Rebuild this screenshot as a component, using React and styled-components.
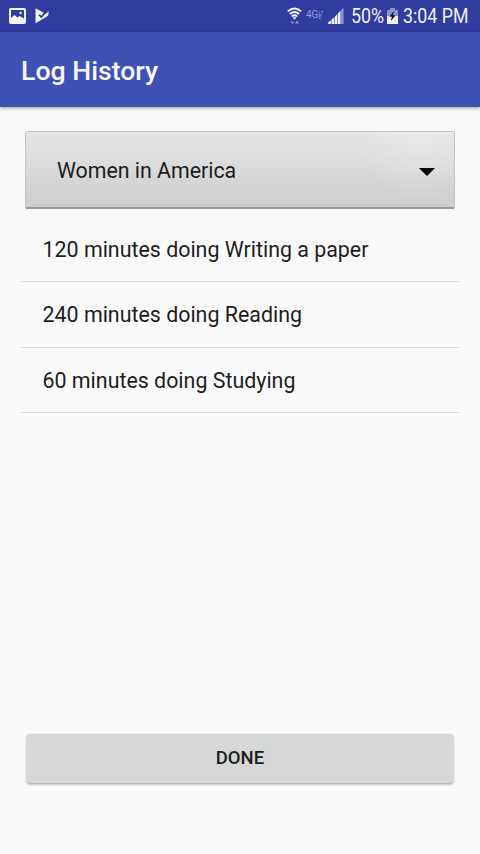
import React from "react";
import styled, { createGlobalStyle } from "styled-components";

const GlobalStyle = createGlobalStyle`
  * {
    box-sizing: border-box;
  }

  body {
    margin: 0;
    background: #fafafa;
    color: #1d1d1d;
    font-family: Roboto, "Liberation Sans", sans-serif;
  }
`;

const Screen = styled.div`
  display: flex;
  flex-direction: column;
  height: 854px;
  width: 480px;
  overflow: hidden;
  background: #fafafa;
`;

const StatusBar = styled.div`
  display: flex;
  align-items: center;
  justify-content: space-between;
  height: 32px;
  padding: 0 11px 0 9px;
  background: #303c9f;
  color: #f0f2fc;
`;

const StatusGroup = styled.div`
  display: flex;
  align-items: center;
  height: 32px;
`;

const StatusText = styled.span`
  width: ${(props) => props.$width}px;
  margin-right: ${(props) => props.$gap || 0}px;
  font-size: 20px;
  line-height: 34px;
  white-space: nowrap;
  transform: scaleX(0.89);
  transform-origin: left;
`;

const Network = styled.span`
  display: flex;
  align-items: center;
  width: 18px;
  height: 10px;
  margin: 0 4px 2px 0;
  color: #929ddd;
  font-size: 10px;
  line-height: 10px;
`;

const NetworkSuffix = styled.span`
  font-size: 5px;
  line-height: 4px;
  width: 5px;
  word-break: break-all;
`;

const StatusIcon = styled.svg`
  display: block;
  flex: none;
  margin-right: ${(props) => props.$gap || 0}px;
`;

const AppBar = styled.header`
  display: flex;
  align-items: center;
  height: 74.5px;
  padding: 3px 21px 0;
  background: #3f51b5;
  box-shadow: 0 1px 4px rgba(0, 0, 0, 0.4);
`;

const Title = styled.h1`
  margin: 0;
  color: #f8f9ff;
  font-size: 26.67px;
  font-weight: 500;
  line-height: 32px;
`;

const Content = styled.main`
  display: flex;
  flex: 1;
  flex-direction: column;
  padding: 24.5px 21px 71.5px;
`;

const Spinner = styled.div`
  display: flex;
  align-items: center;
  justify-content: space-between;
  height: 78px;
  margin: 0 4.5px 8px 4px;
  padding: 1px 18.5px 0 31px;
  border: 1px solid #c2c2c2;
  border-bottom: 2px solid #999;
  border-radius: 2px;
  background:
    radial-gradient(ellipse 60px 60px at 92% 10%, rgba(255, 255, 255, 0.2), transparent),
    linear-gradient(#e5e5e5, #cecece);
  font-size: 21.33px;
`;

const Arrow = styled.svg`
  display: block;
  margin-top: 3px;
`;

const LogList = styled.ul`
  flex: 1;
  margin: 0;
  padding: 0;
  list-style: none;
`;

const LogItem = styled.li`
  display: flex;
  align-items: center;
  height: 65.4px;
  padding: 0.6px 21.5px 0;
  border-bottom: 1px solid #dcdcdc;
  font-size: 21.4px;
`;

const DoneButton = styled.button`
  height: 49px;
  margin: 0 6px;
  padding: 0;
  border: 0;
  border-radius: 3px;
  background: #d6d7d7;
  box-shadow: 0 1px 3px rgba(0, 0, 0, 0.4);
  color: #1d1d1d;
  font-family: inherit;
  font-size: 18.5px;
  font-weight: 500;
  text-transform: uppercase;
`;

const LOGS = [
  { minutes: 120, activity: "Writing a paper" },
  { minutes: 240, activity: "Reading" },
  { minutes: 60, activity: "Studying" },
];

const PictureIcon = () => (
  <StatusIcon $gap={9} width="17" height="16" viewBox="0 0 17 16">
    <rect x="1" y="1" width="15" height="14" rx="1" fill="none" stroke="#f0f2fc" strokeWidth="2" />
    <path d="M2 10l3.5-3 3 2.5L10.5 8l4.5 2.5V14H2z" fill="#f0f2fc" />
    <circle cx="11.5" cy="5" r="1.2" fill="#f0f2fc" />
  </StatusIcon>
);

const PlayCheckIcon = () => (
  <StatusIcon width="14" height="16" viewBox="0 0 14 16">
    <path d="M.5 1.2Q.5.2 1.5.7L13.5 7.5 1.5 14.8Q.5 15.2.5 14z" fill="#f0f2fc" />
    <path d="M9 7L13.5 3.3v2.9L9.5 10z" fill="#f0f2fc" />
    <path d="M4 6.8L6.2 9 10.6 4.2" fill="none" stroke="#28347f" strokeWidth="1.6" />
  </StatusIcon>
);

const WifiIcon = () => (
  <StatusIcon $gap={4} width="15" height="18" viewBox="0 0 15 18">
    <g fill="none" stroke="#f0f2fc" strokeWidth="1.9">
      <path d="M.8 4.4Q7.5-1.6 14.2 4.4" />
      <path d="M2.8 7Q7.5 3 12.2 7" />
      <path d="M4.8 9.4Q7.5 7.2 10.2 9.4" />
    </g>
    <circle cx="7.5" cy="11" r="1.3" fill="#f0f2fc" />
    <path d="M3.5 14.5h4L5.5 17zM8 16.5h4l-2-3z" fill="#8f9ad5" />
  </StatusIcon>
);

const SignalIcon = () => (
  <StatusIcon $gap={7} width="16" height="16" viewBox="0 0 16 16">
    <path
      d="M.3 16v-2l2.6-1.6V16zM3.5 16v-4.5l2.6-2V16zM6.7 16V9l2.6-3v10zM9.9 16V5.5l2.6-3V16z"
      fill="#f0f2fc"
    />
    <path d="M13.1 2l2.4-2v16h-2.4z" fill="#8f9ad5" />
  </StatusIcon>
);

const BatteryIcon = () => (
  <StatusIcon $gap={5} width="11" height="16" viewBox="0 0 11 16">
    <path d="M3 0h5v2h3v6H0V2h3z" fill="#8993ce" />
    <path d="M0 8h11v8H0z" fill="#f0f2fc" />
    <path d="M6.8 3L2.3 8.7h2.6L3.8 13.2 8.6 7.3H6z" fill="#111525" />
  </StatusIcon>
);

const App = () => {
  return (
    <>
      <GlobalStyle />
      <Screen>
        <StatusBar>
          <StatusGroup>
            <PictureIcon />
            <PlayCheckIcon />
          </StatusGroup>
          <StatusGroup>
            <WifiIcon />
            <Network>
              4G<NetworkSuffix>LTE</NetworkSuffix>
            </Network>
            <SignalIcon />
            <StatusText $width={32} $gap={4}>50%</StatusText>
            <BatteryIcon />
            <StatusText $width={66}>3:04 PM</StatusText>
          </StatusGroup>
        </StatusBar>
        <AppBar>
          <Title>Log History</Title>
        </AppBar>
        <Content>
          <Spinner>
            <span>Women in America</span>
            <Arrow width="16" height="8" viewBox="0 0 16 8">
              <path d="M0 0h16L8 8z" fill="#000" />
            </Arrow>
          </Spinner>
          <LogList>
            {LOGS.map(({ minutes, activity }) => (
              <LogItem key={activity}>
                {minutes} minutes doing {activity}
              </LogItem>
            ))}
          </LogList>
          <DoneButton type="button">Done</DoneButton>
        </Content>
      </Screen>
    </>
  );
};

export default App;
